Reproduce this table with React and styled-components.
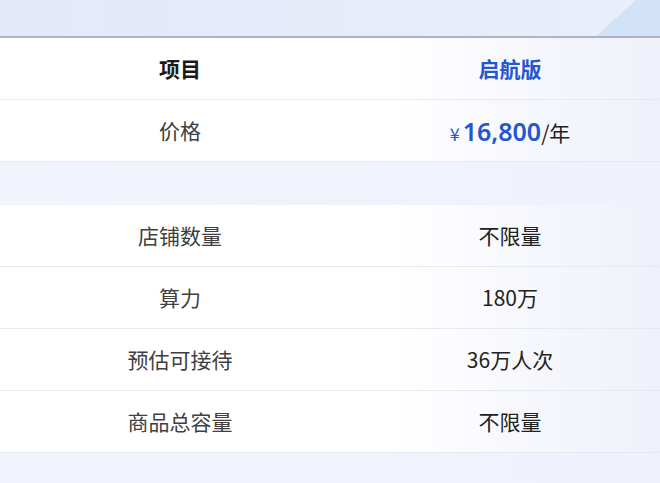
import { styled, createGlobalStyle } from "styled-components";

const GlobalStyle = createGlobalStyle`
    html, body {
        margin: 0;
        padding: 0;
        background: #f0f3fd;
    }
    body {
        font-family: "Noto Sans CJK SC", "Noto Sans", sans-serif;
    }
`;

const Page = styled.div`
    width: 660px;
    height: 483px;
    overflow: hidden;
    display: flex;
    flex-direction: column;
    background: #f0f3fd;
`;

const TopBand = styled.div`
    height: 36px;
    flex-shrink: 0;
    background:
        linear-gradient(to bottom right, transparent 50%, #d2e3f7 50%) 596px 0 / 40px 36px no-repeat,
        linear-gradient(#d4e4f8, #d2e3f7) right 0 top 0 / 24px 36px no-repeat,
        linear-gradient(90deg, #e3e8fb 0%, #e7ecfa 60%, #e8eefa 100%);
    border-bottom: 2px solid #adb3c6;
`;

const Section = styled.div`
    display: flex;
    flex-direction: column;
`;

const Row = styled.div`
    height: 61px;
    display: grid;
    grid-template-columns: 360px 300px;
    align-items: center;
    border-bottom: 1px solid #e6e9f1;
    background: linear-gradient(90deg, #ffffff 0%, #ffffff 60%, #f6f7fc 82%, #eef1fa 100%);
`;

const Cell = styled.div`
    text-align: center;
    font-size: 21px;
    line-height: 1;
    font-weight: ${(props) => (props.$bold ? 700 : 400)};
    color: ${(props) => props.$color || "#222"};
`;

const Gap = styled.div`
    height: ${(props) => props.$height}px;
    flex-shrink: 0;
    background: linear-gradient(90deg, #f1f3fd 0%, #eff2fc 100%);
`;

const Price = styled.div`
    display: flex;
    justify-content: center;
    align-items: baseline;
    color: #222;
    font-size: 21px;
`;

const Yen = styled.span`
    color: #2a5bd1;
    font-size: 18px;
    margin-right: 3px;
`;

const Amount = styled.span`
    color: #2456cf;
    font-size: 25px;
    font-weight: 600;
    font-family: "Noto Sans", sans-serif;
`;

const rows = [
    ["店铺数量", "不限量"],
    ["算力", "180万"],
    ["预估可接待", "36万人次"],
    ["商品总容量", "不限量"],
];

export default function App() {
    return (
        <>
            <GlobalStyle />
            <Page>
                <TopBand />
                <Section>
                    <Row>
                        <Cell $bold $color="#1a1a1a">项目</Cell>
                        <Cell $bold $color="#2456cf">启航版</Cell>
                    </Row>
                    <Row>
                        <Cell $color="#404040">价格</Cell>
                        <Price>
                            <Yen>¥</Yen>
                            <Amount>16,800</Amount>
                            <span>/年</span>
                        </Price>
                    </Row>
                </Section>
                <Gap $height={43} />
                <Section>
                    {rows.map(([label, value]) => (
                        <Row key={label}>
                            <Cell $color="#404040">{label}</Cell>
                            <Cell>{value}</Cell>
                        </Row>
                    ))}
                </Section>
                <Gap $height={40} />
            </Page>
        </>
    );
}
